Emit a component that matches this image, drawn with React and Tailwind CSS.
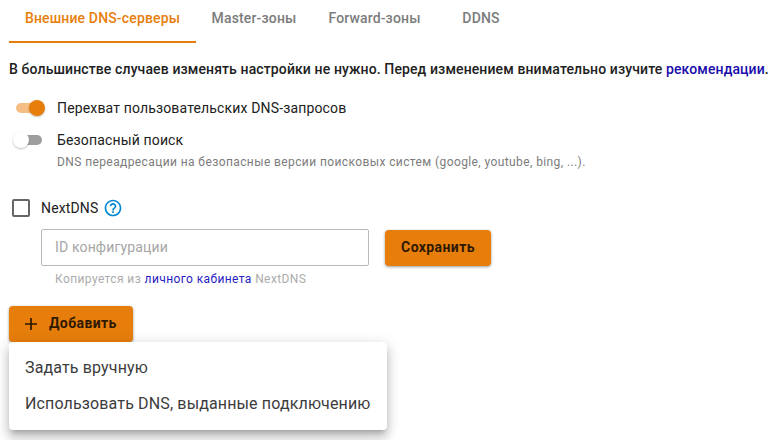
import React from 'react';

const tabs = [
  { label: 'Master-зоны', box: 'w-[116px]' },
  { label: 'Forward-зоны', box: 'w-[125px]' },
  { label: 'DDNS', box: 'w-[88px]' },
];

function Switch({ on }) {
  return (
    <span className={`relative block h-[10px] w-[26px] rounded-full ${on ? 'bg-[#f4be85]' : 'bg-[#9e9e9e]'}`}>
      <span
        className={`absolute -top-[3px] size-4 rounded-full shadow-[0_1px_2px_rgba(0,0,0,0.25)] ${on ? 'left-[13px] bg-[#e77e0b]' : '-left-[3px] bg-white'}`}
      />
    </span>
  );
}

export default function App() {
  return (
    <div className="h-[440px] w-[776px] overflow-hidden bg-white pl-[9px] font-['Roboto','Liberation_Sans',sans-serif] text-[14px] text-[#212121]">
      <div className="flex h-[43px] whitespace-nowrap leading-5 font-medium tracking-[0.15px] text-[#7c7c7c]">
        <div className="w-[187px] border-b-2 border-[#e77e0b] pt-2 text-center text-[#e77e0b]">Внешние DNS-серверы</div>
        {tabs.map((t) => (
          <div key={t.label} className={`pt-2 text-center ${t.box}`}>{t.label}</div>
        ))}
      </div>

      <p className="mt-4 whitespace-nowrap leading-5 font-medium tracking-[0.12px]">
        В большинстве случаев изменять настройки не нужно. Перед изменением внимательно изучите{' '}
        <a className="text-[#1a0dab]">рекомендации</a>.
      </p>

      <div className="mt-[19px] flex h-5 items-center pl-[7px]">
        <Switch on />
        <span className="ml-[15px] tracking-[0.15px]">Перехват пользовательских DNS-запросов</span>
      </div>
      <div className="mt-3 flex h-5 items-center pl-[7px]">
        <Switch />
        <span className="ml-[15px] tracking-[0.15px]">Безопасный поиск</span>
      </div>
      <p className="mt-[3px] pl-12 text-[12px] leading-[18px] tracking-[0.4px] text-[#7c7c7c]">
        DNS переадресации на безопасные версии поисковых систем (google, youtube, bing, ...).
      </p>

      <div className="mt-[27px] flex h-5 items-center pl-[3px]">
        <span className="size-[18px] rounded-[2px] border-2 border-[#666]" />
        <span className="ml-[11px] w-[59px] tracking-[0.15px]">NextDNS</span>
        <svg className="ml-[3px] size-5" viewBox="0 0 24 24" fill="#0288d1">
          <path d="M11 18h2v-2h-2v2zm1-16C6.48 2 2 6.48 2 12s4.48 10 10 10 10-4.48 10-10S17.52 2 12 2zm0 18c-4.41 0-8-3.59-8-8s3.59-8 8-8 8 3.59 8 8-3.59 8-8 8zm0-14c-2.21 0-4 1.79-4 4h2c0-1.1.9-2 2-2s2 .9 2 2c0 2-3 1.75-3 5h2c0-2.25 3-2.5 3-5 0-2.21-1.79-4-4-4z" />
        </svg>
      </div>

      <div className="mt-[11px] flex pl-8">
        <div className="flex h-[37px] w-[328px] items-center rounded-[2px] border border-[#b8b8b8] pl-[13px] tracking-[0.15px] text-[#a6a6a6]">ID конфигурации</div>
        <button className="mt-px ml-4 h-9 w-[106px] rounded bg-[#e77e0b] pb-0.5 font-bold tracking-[0.4px] text-[#2e1902] shadow-[0_1px_3px_rgba(0,0,0,0.4)]">Сохранить</button>
      </div>
      <p className="mt-[5px] pl-[46px] text-[12px] leading-4 tracking-[0.4px] text-[#acacac]">
        Копируется из <a className="text-[#2a1dc0]">личного кабинета</a> NextDNS
      </p>

      <button className="mt-[19px] flex h-9 w-[124px] items-center rounded bg-[#e77e0b] pl-4 font-bold tracking-[0.4px] text-[#2e1902] shadow-[0_1px_3px_rgba(0,0,0,0.4)]">
        <svg className="mr-3 size-3" viewBox="0 0 12 12" stroke="currentColor" strokeWidth="1.7">
          <path d="M0 6h12M6 0v12" />
        </svg>
        <span className="pb-0.5">Добавить</span>
      </button>
      <div className="relative h-[88px] w-[378px] rounded bg-white pt-2 pl-4 text-[16px] leading-9 tracking-[0.14px] text-[#3c3c3c] shadow-[0_5px_5px_-3px_rgba(0,0,0,0.2),0_8px_10px_1px_rgba(0,0,0,0.14),0_3px_14px_2px_rgba(0,0,0,0.12)]">
        <div>Задать вручную</div>
        <div>Использовать DNS, выданные подключению</div>
      </div>
    </div>
  );
}
